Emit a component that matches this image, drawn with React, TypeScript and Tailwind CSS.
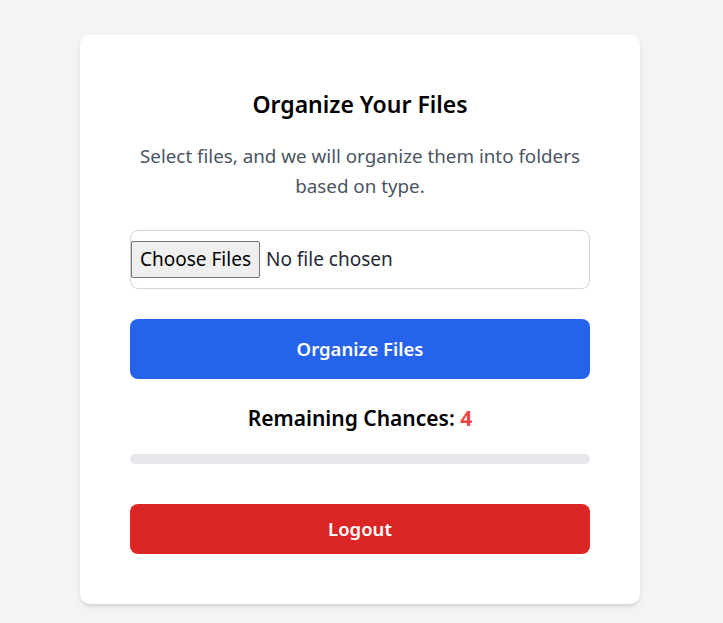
export default function App() {
  const remaining = 4;

  return (
    <div className="min-h-screen bg-[#f3f4f6] pt-[35px] pb-6" style={{ fontFamily: '"Noto Sans", "Open Sans", sans-serif' }}>
      <div className="ml-[80px] w-[560px] rounded-[10px] bg-white px-[50px] pt-[53px] pb-[50px] shadow-md">
        <h1 className="text-center text-[23px] leading-8 font-semibold text-black">Organize Your Files</h1>
        <p className="mt-[21px] text-center text-[18.8px] leading-[30px] text-[#4b5563]">
          Select files, and we will organize them into folders based on type.
        </p>

        {/* file picker */}
        <div className="mt-[29px] flex h-[59px] items-center rounded-lg border border-[#d1d5db]">
          <button className="h-[37px] rounded-[2px] border border-[#767676] bg-[#efefef] px-[8px] text-[19px] text-black">
            Choose Files
          </button>
          <span className="ml-[6px] text-[19px] text-[#1f2937]">No file chosen</span>
        </div>

        <button className="mt-[30px] h-[60px] w-full rounded-lg bg-[#2563eb] text-[18.5px] font-semibold text-white">
          Organize Files
        </button>

        <p className="mt-[25px] text-center text-[21px] leading-7 font-semibold text-black">
          Remaining Chances: <span className="font-bold text-[#ef4444]">{remaining}</span>
        </p>

        <div className="mt-[22px] h-2.5 w-full rounded-full bg-[#e5e7eb]" />

        <button className="mt-[40px] h-[50px] w-full rounded-lg bg-[#dc2626] text-[18.5px] font-semibold text-white">
          Logout
        </button>
      </div>
    </div>
  );
}
